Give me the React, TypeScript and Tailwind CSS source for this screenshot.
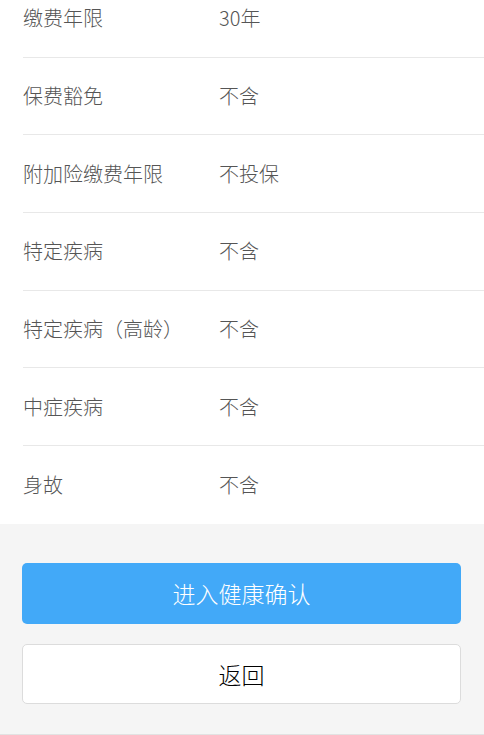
import React from 'react';

const rows = [
  { label: '缴费年限', value: '30年' },
  { label: '保费豁免', value: '不含' },
  { label: '附加险缴费年限', value: '不投保' },
  { label: '特定疾病', value: '不含' },
  { label: '特定疾病（高龄）', value: '不含' },
  { label: '中症疾病', value: '不含' },
  { label: '身故', value: '不含' },
];

const App = () => {
  return (
    <div
      className="w-[484px] h-[735px] overflow-hidden bg-[#f5f5f5] flex flex-col font-light"
      style={{ fontFamily: '"Noto Sans CJK SC", "Noto Sans", sans-serif' }}
    >
      {/* Detail list */}
      <div className="bg-white pl-[23px] -mt-[20px]">
        {rows.map((row, i) => (
          <div
            key={row.label}
            className={`h-[77.7px] flex items-center text-[20px] text-[#555] ${
              i < rows.length - 1 ? 'border-b border-[#e8e8e8]' : ''
            }`}
          >
            <span className="w-[196px] shrink-0">{row.label}</span>
            <span>{row.value}</span>
          </div>
        ))}
      </div>

      {/* Actions */}
      <div className="flex-1 px-[22px] pt-[39px] flex flex-col gap-[20px] border-b border-[#e2e2e2]">
        <button className="h-[61px] w-[439px] rounded-[5px] bg-[#42a9f8] text-white text-[23px]">
          进入健康确认
        </button>
        <button className="h-[60px] w-[439px] rounded-[5px] bg-white border border-[#dcdcdc] text-black text-[23px]">
          返回
        </button>
      </div>
    </div>
  );
};

export default App;
